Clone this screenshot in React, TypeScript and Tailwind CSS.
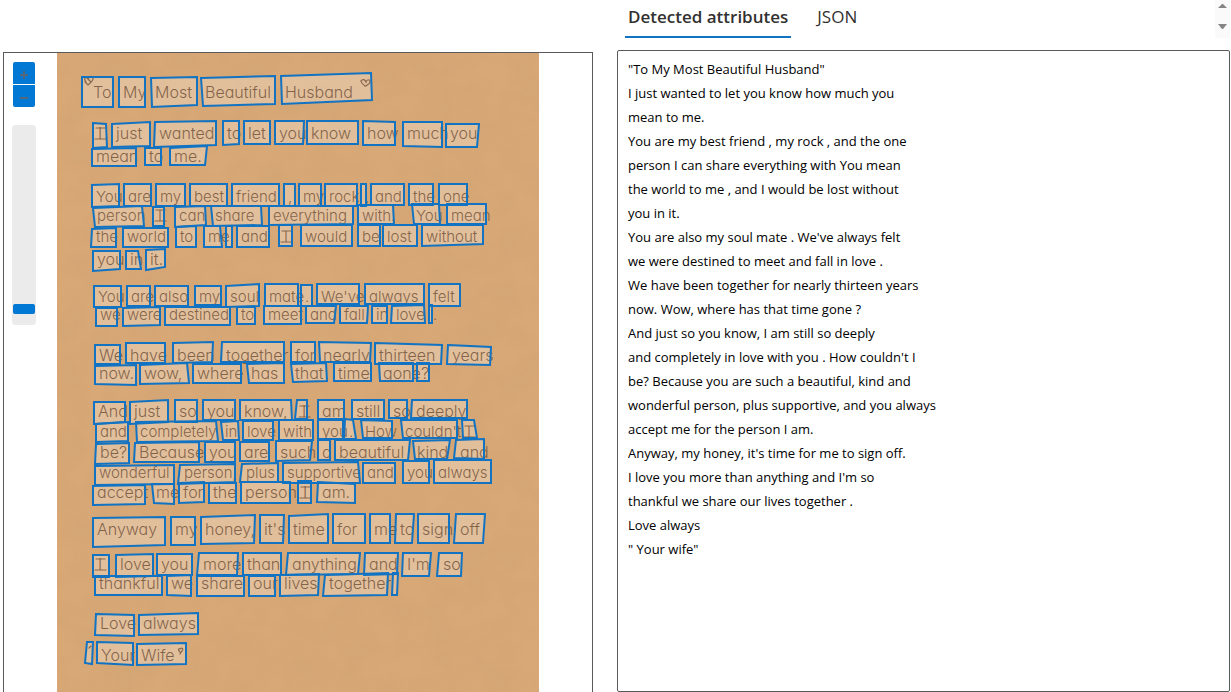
import React, { useState } from "react";

type Word = { text: string; quad: number[] };
type Line = { baseline: number; dense?: boolean; words: Word[] };

// A quad lists its corners clockwise from the top left; four numbers stand for an upright box.
const w = (text: string, ...quad: number[]): Word => ({ text, quad });

const LINES: Line[] = [
  { baseline: 98, words: [w(" To", 82, 77, 113, 107), w("My", 119, 77, 145, 107), w("Most", 151, 78, 197, 77, 197, 105, 152, 107), w("Beautiful", 201, 78, 275, 76, 275, 104, 203, 106), w("Husband", 281, 76, 371, 73, 372, 100, 282, 104)] },
  { baseline: 139, words: [w("I", 93, 123, 106, 124, 107, 147, 93, 148), w("just", 112, 124, 150, 122, 150, 146, 112, 147), w("wanted", 155, 122, 216, 121, 216, 145, 154, 147), w("to", 223, 121, 239, 121, 239, 144, 223, 145), w("let", 244, 121, 270, 144), w("you", 275, 121, 304, 121, 303, 144, 275, 144), w("know", 307, 121, 358, 144), w("how", 363, 121, 395, 122, 395, 145, 363, 145), w("much", 403, 122, 442, 122, 442, 147, 403, 146), w("you", 446, 124, 479, 124, 477, 147, 446, 147)] },
  { baseline: 162, words: [w("mean", 92, 149, 136, 148, 136, 166, 92, 166), w("to", 145, 148, 161, 165), w("me.", 170, 148, 207, 146, 205, 165, 170, 165)] },
  { baseline: 202, dense: true, words: [w("You", 92, 185, 119, 184, 119, 206, 92, 207), w("are", 124, 184, 151, 206), w("my", 156, 184, 185, 206), w("best", 190, 184, 227, 206), w("friend", 232, 184, 279, 206), w(",", 284, 184, 295, 206), w("my", 299, 184, 321, 206), w("rock", 325, 184, 357, 206), w(",", 361, 184, 366, 206), w("and", 371, 184, 404, 205), w("the", 409, 184, 433, 205), w("one", 439, 184, 467, 205)] },
  { baseline: 221, dense: true, words: [w("person", 93, 208, 142, 206, 144, 226, 95, 227), w("I", 153, 207, 164, 226), w("can", 175, 207, 205, 206, 206, 225, 175, 227), w("share", 211, 206, 261, 206, 262, 225, 213, 226), w("everything", 269, 206, 353, 206, 353, 224, 269, 225), w("with.", 358, 205, 393, 205, 394, 224, 358, 224), w("You", 412, 204, 439, 204, 440, 224, 414, 224), w("mean", 447, 204, 486, 224)] },
  { baseline: 242, dense: true, words: [w("the", 92, 229, 116, 228, 116, 247, 91, 247), w("world", 123, 228, 168, 247), w("to", 176, 227, 196, 226, 196, 247, 176, 247), w("me", 204, 226, 220, 226, 222, 247, 204, 247), w(",", 226, 226, 232, 247), w("and", 237, 226, 269, 247), w("I", 279, 225, 292, 246), w("would", 301, 225, 352, 246), w("be", 358, 225, 380, 246), w("lost", 383, 225, 417, 246), w("without", 422, 225, 483, 225, 483, 244, 422, 246)] },
  { baseline: 265, words: [w("you", 93, 251, 120, 251, 120, 269, 93, 271), w("in", 126, 251, 138, 251, 141, 269, 126, 269), w("it.", 146, 250, 165, 249, 165, 267, 146, 270)] },
  { baseline: 302, dense: true, words: [w("You", 94, 286, 121, 307), w("are", 127, 286, 150, 306), w("also", 155, 286, 188, 306), w("my", 195, 286, 221, 305), w("soul", 226, 286, 259, 284, 259, 306, 226, 307), w("mate", 265, 284, 298, 306), w(".", 301, 285, 312, 306), w("We've", 317, 284, 359, 304), w("always", 365, 284, 424, 304), w("felt", 429, 284, 460, 306)] },
  { baseline: 320, dense: true, words: [w("we", 96, 308, 117, 326), w("were", 123, 308, 160, 307, 160, 325, 123, 326), w("destined", 165, 307, 230, 325), w("to", 237, 307, 255, 324), w("meet", 264, 306, 301, 324), w("and", 306, 306, 336, 306, 334, 323, 306, 323), w("fall", 340, 306, 368, 306, 367, 323, 340, 323), w("in", 372, 306, 387, 323), w("love", 392, 306, 424, 305, 425, 323, 391, 323), w(".", 429, 305, 432, 323)] },
  { baseline: 361, words: [w("We", 95, 345, 120, 364), w("have", 126, 343, 165, 363), w("been", 173, 343, 213, 342, 212, 362, 173, 363), w("together", 222, 342, 284, 342, 284, 362, 221, 362), w("for", 291, 342, 315, 362), w("nearly", 319, 342, 371, 343, 370, 362, 320, 362), w("thirteen", 375, 343, 442, 345, 441, 364, 375, 364), w("years", 448, 345, 491, 347, 490, 365, 447, 364)] },
  { baseline: 379, words: [w("now.", 95, 366, 136, 365, 136, 385, 95, 384), w("wow,", 140, 365, 187, 363, 189, 383, 140, 384), w("where", 193, 364, 241, 383), w("has", 247, 364, 284, 363, 284, 383, 249, 383), w("that", 291, 364, 326, 363, 327, 381, 293, 382), w("time", 334, 363, 371, 381), w("gone", 379, 363, 413, 363, 413, 381, 380, 381), w("?", 417, 363, 429, 381)] },
  { baseline: 417, words: [w("And", 94, 402, 125, 402, 125, 422, 94, 424), w("just", 130, 402, 168, 400, 168, 422, 130, 424), w("so", 175, 400, 197, 422), w("you", 203, 400, 235, 420), w("know,", 240, 400, 291, 400, 292, 420, 240, 420), w("I", 297, 400, 307, 400, 307, 419, 295, 419), w("am", 318, 400, 344, 419), w("still", 352, 400, 384, 419), w("so", 389, 400, 407, 418), w("deeply", 412, 400, 467, 400, 467, 418, 411, 418)] },
  { baseline: 437, dense: true, words: [w("and", 96, 424, 128, 422, 128, 441, 96, 442), w("completely", 136, 422, 216, 421, 218, 441, 137, 442), w("in", 221, 422, 238, 421, 239, 440, 223, 440), w("love", 243, 421, 273, 440), w("with", 279, 420, 313, 440), w("you", 318, 420, 343, 439), w(".", 345, 419, 353, 420, 356, 439, 344, 439), w("How", 361, 420, 392, 421, 392, 438, 363, 438), w("couldn't", 401, 420, 457, 420, 457, 438, 403, 438), w("I", 462, 420, 474, 420, 477, 438, 463, 438)] },
  { baseline: 458, words: [w("be?", 96, 444, 129, 443, 129, 463, 95, 464), w("Because", 135, 443, 199, 442, 199, 462, 134, 462), w("you", 205, 442, 235, 462), w("are", 240, 442, 269, 461), w("such", 276, 441, 312, 441, 310, 460, 276, 461), w("a", 318, 440, 330, 460), w("beautiful", 335, 440, 410, 440, 408, 460, 335, 460), w("kind", 413, 441, 450, 440, 447, 459, 415, 459), w("and", 456, 440, 484, 439, 484, 459, 454, 458)] },
  { baseline: 478, dense: true, words: [w("wonderful", 95, 466, 174, 465, 174, 484, 95, 485), w("person,", 180, 465, 235, 464, 235, 482, 178, 484), w("plus", 242, 464, 278, 463, 278, 482, 240, 482), w("supportive", 283, 463, 358, 462, 360, 483, 283, 483), w("and", 363, 463, 395, 483), w("you", 403, 461, 429, 483), w("always", 434, 460, 491, 483)] },
  { baseline: 498, words: [w("accept", 93, 486, 145, 485, 145, 504, 93, 505), w("me", 152, 484, 174, 484, 174, 504, 154, 503), w("for", 179, 483, 204, 482, 204, 502, 179, 503), w("the", 209, 483, 236, 503), w("person", 241, 482, 290, 503), w("I", 298, 481, 311, 503), w("am.", 318, 482, 355, 484, 355, 503, 317, 502)] },
  { baseline: 535, words: [w("Anyway", 93, 518, 165, 517, 165, 545, 93, 547), w("my", 171, 517, 195, 545), w("honey,", 201, 517, 255, 515, 254, 543, 201, 544), w("it's", 260, 515, 284, 515, 283, 543, 260, 543), w("time", 289, 516, 328, 514, 328, 543, 289, 543), w("for", 333, 514, 365, 543), w("me", 370, 514, 390, 543), w("to", 396, 514, 414, 514, 412, 543, 395, 543), w("sign", 418, 514, 449, 543), w("off", 456, 514, 485, 514, 483, 543, 454, 543)] },
  { baseline: 570, words: [w("I", 93, 555, 109, 577), w("love", 116, 555, 153, 554, 153, 576, 116, 577), w("you", 157, 554, 192, 575), w("more", 199, 553, 238, 553, 237, 575, 197, 575), w("than", 243, 553, 281, 575), w("anything", 288, 553, 360, 553, 358, 574, 286, 575), w("and", 365, 553, 398, 553, 397, 574, 364, 575), w("I'm", 403, 553, 431, 553, 429, 576, 402, 576), w("so", 439, 553, 462, 553, 461, 576, 437, 576)] },
  { baseline: 589, words: [w("thankful", 95, 576, 162, 595), w("we", 167, 576, 191, 575, 191, 596, 167, 595), w("share", 197, 576, 244, 596), w("our", 249, 576, 275, 596), w("lives", 280, 575, 319, 574, 318, 595, 280, 596), w("together", 325, 575, 388, 573, 387, 595, 323, 596), w("", 393, 573, 398, 573, 397, 595, 392, 595)] },
  { baseline: 629, words: [w("Love", 96, 614, 134, 615, 134, 636, 95, 635), w("always", 139, 615, 198, 613, 198, 634, 139, 635)] },
  { baseline: 661, words: [w("", 87, 642, 93, 642, 92, 664, 85, 663), w("Your", 97, 642, 133, 643, 133, 665, 97, 663), w("Wife", 137, 644, 186, 643, 186, 664, 137, 665)] },
];

const RESULT = [
  "\"To My Most Beautiful Husband\"",
  "I just wanted to let you know how much you",
  "mean to me.",
  "You are my best friend , my rock , and the one",
  "person I can share everything with You mean",
  "the world to me , and I would be lost without",
  "you in it.",
  "You are also my soul mate . We've always felt",
  "we were destined to meet and fall in love .",
  "We have been together for nearly thirteen years",
  "now. Wow, where has that time gone ?",
  "And just so you know, I am still so deeply",
  "and completely in love with you . How couldn't I",
  "be? Because you are such a beautiful, kind and",
  "wonderful person, plus supportive, and you always",
  "accept me for the person I am.",
  "Anyway, my honey, it's time for me to sign off.",
  "I love you more than anything and I'm so",
  "thankful we share our lives together .",
  "Love always",
  "\" Your wife\"",
];

function corners(q: number[]) {
  return q.length === 4 ? [q[0], q[1], q[2], q[1], q[2], q[3], q[0], q[3]] : q;
}

function inset(text: string) {
  if (text.startsWith(" ")) return 11;
  if (text === "I") return 5;
  return 4;
}

function Letter() {
  const words = LINES.flatMap((line) => line.words);
  return (
    <svg viewBox="57 53 482 639" className="block h-auto w-full bg-[#d8a876]" role="img" aria-label="Handwritten letter">
      <defs>
        <filter id="grain" x="0" y="0" width="100%" height="100%">
          <feTurbulence type="fractalNoise" baseFrequency="0.035" numOctaves="3" seed="8" />
          <feColorMatrix values="0 0 0 0 0.55  0 0 0 0 0.34  0 0 0 0 0.16  0.6 0 0 0 -0.18" />
        </filter>
      </defs>
      <rect x="57" y="53" width="482" height="639" filter="url(#grain)" opacity="0.6" />
      {words.map((word, i) => (
        <polygon key={i} points={corners(word.quad).join(" ")} fill="#ffffff" fillOpacity="0.28" />
      ))}
      <g fill="#71533c" fillOpacity="0.85" className="font-['Inter',sans-serif] font-light [font-feature-settings:'cv11']">
        {LINES.map((line, i) => (
          <g key={i} className={line.dense ? "text-[15px]" : "text-[16px]"}>
            {line.words.map((word, j) => (
              <text key={j} x={word.quad[0] + inset(word.text)} y={line.baseline}>
                {word.text.trim()}
              </text>
            ))}
          </g>
        ))}
      </g>
      <g fill="none" stroke="#71533c" strokeWidth="1.2" strokeLinecap="round" strokeOpacity="0.8">
        <path d="M86 82c-3-4 0-6 2-3 2-4 5-3 5 0 0 2-3 4-5 6l-3-3M88 79l3 3" />
        <path d="M365 86c-4-3-5-6-3-6 2-1 3 0 4 2 1-3 4-3 4 0 0 2-3 3-4 4" />
        <path d="M180 652c-2-2-2-4 0-3 2-2 4 0 2 2l-2 3" />
        <path d="M89 648l2-2" />
        {LINES.map((line) =>
          line.words
            .filter((word) => word.text === "I")
            .map((word) => {
              const x = word.quad[0] + 2;
              return <path key={x} d={`M${x} ${line.baseline}h11M${x + 1} ${line.baseline - 11}h9`} />;
            }),
        )}
      </g>
      <g fill="none" stroke="#1273c2" strokeWidth="2">
        {words.map((word, i) => (
          <polygon key={i} points={corners(word.quad).join(" ")} />
        ))}
      </g>
    </svg>
  );
}

export default function App() {
  const [zoom, setZoom] = useState(6);
  return (
    <main className="grid h-screen grid-cols-[590fr_613fr] gap-6 overflow-hidden bg-white pr-px pl-[3px] font-['Open_Sans','Noto_Sans',sans-serif] text-black">
      <section className="mt-[52px] flex items-start overflow-hidden border border-b-0 border-[#5a5a5a]" aria-label="Document">
        <div className="flex w-[53px] shrink-0 flex-col items-start pt-[9px] pl-2">
          <div className="ml-px flex w-[22px] flex-col gap-px">
            <button type="button" aria-label="Zoom in" onClick={() => setZoom(Math.min(100, zoom + 5))} className="flex h-[22px] items-center justify-center rounded-t-xs bg-[#0078d4] pt-1 text-[#54677a]">
              <svg className="shrink-0" width="8" height="8" viewBox="0 0 8 8" fill="none" stroke="currentColor" strokeWidth="2"><path d="M0 4h8M4 0v8" /></svg>
            </button>
            <button type="button" aria-label="Zoom out" onClick={() => setZoom(Math.max(0, zoom - 5))} className="flex h-[22px] items-center justify-center rounded-b-xs bg-[#0078d4] pt-1 text-[#54677a]">
              <svg className="shrink-0" width="8" height="8" viewBox="0 0 8 8" fill="none" stroke="currentColor" strokeWidth="2"><path d="M0 4h8" /></svg>
            </button>
          </div>
          <input
            type="range"
            aria-label="Zoom level"
            value={zoom}
            onChange={(e) => setZoom(Number(e.target.value))}
            className="mt-[18px] h-[200px] w-6 appearance-none rounded-sm bg-[#ebebeb] [direction:rtl] [writing-mode:vertical-lr] [&::-webkit-slider-thumb]:h-[10px] [&::-webkit-slider-thumb]:w-[22px] [&::-webkit-slider-thumb]:appearance-none [&::-webkit-slider-thumb]:rounded-xs [&::-webkit-slider-thumb]:bg-[#0078d4]"
          />
        </div>
        <div className="min-w-0 flex-1 pr-[53px]">
          <Letter />
        </div>
      </section>

      <section className="flex min-w-0 flex-col" aria-label="Results">
        <header className="flex h-[50px] shrink-0 items-start justify-between pl-2">
          <div role="tablist" className="flex gap-[22px] text-[17px] leading-6 text-[#323130]">
            <button role="tab" aria-selected="true" type="button" className="h-[38px] border-b-2 border-[#1173c4] px-[3px] pt-[5px] pb-[7px] font-semibold">Detected attributes</button>
            <button role="tab" aria-selected="false" type="button" className="h-[38px] px-1 pt-[5px] pb-[9px]">JSON</button>
          </div>
          <div className="flex h-[38px] w-[15px] flex-col items-center gap-4 bg-[#fafafa] pt-1 text-[#858585]">
            <button type="button" aria-label="Scroll up" className="block h-1"><svg className="block" width="9" height="4" viewBox="0 0 9 4"><path fill="currentColor" d="M0 4 4 0h1l4 4z" /></svg></button>
            <button type="button" aria-label="Scroll down" className="block h-1"><svg className="block" width="9" height="5" viewBox="0 0 9 5"><path fill="currentColor" d="M0 0h9L5 5H4z" /></svg></button>
          </div>
        </header>
        <div role="tabpanel" className="flex-1 rounded-xs border border-[#5a5a5a] px-[10px] pt-[6px] text-[13px] leading-6">
          {RESULT.map((line) => (
            <p key={line}>{line}</p>
          ))}
        </div>
      </section>
    </main>
  );
}
